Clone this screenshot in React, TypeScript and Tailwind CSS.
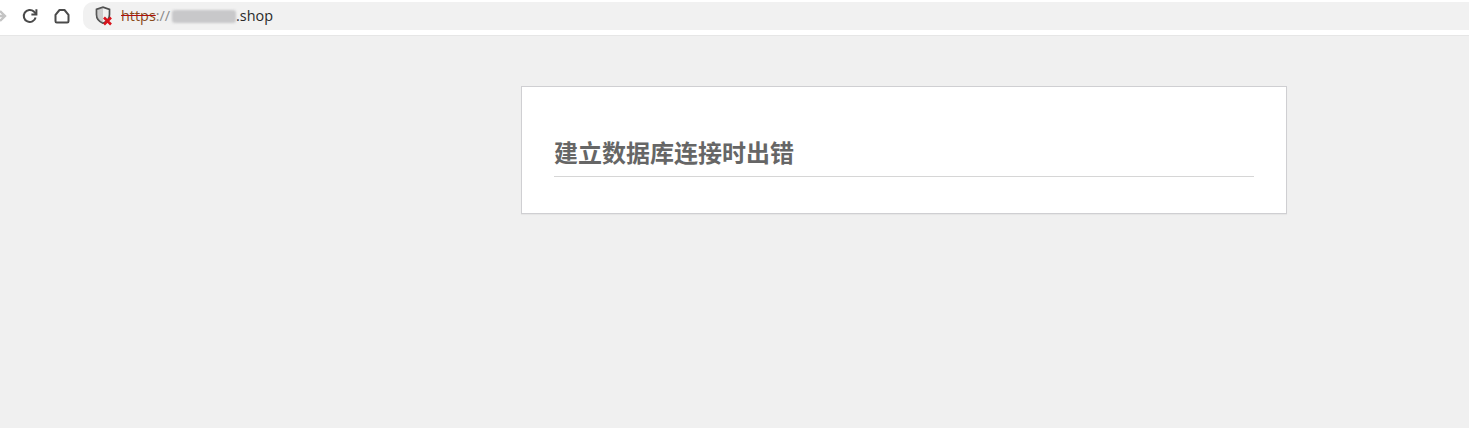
import React from 'react'

const TopBar = () => (
  <div className="flex h-[36px] items-start border-b border-[#e6e6e6] bg-white pt-[2px]">
    <div className="flex h-[28px] w-[21px] items-center">
      <svg width="8" height="14" viewBox="0 0 8 14" fill="none" stroke="#c4c4c4" strokeWidth="2.4">
        <path d="M-2 7h7M0 2l5 5-5 5" />
      </svg>
    </div>
    <div className="mr-[14px] flex h-[28px] items-center">
      <svg width="18" height="18" viewBox="0 0 18 18" fill="none" stroke="#4a4a4a" strokeWidth="2">
        <path d="M14.600 10.400A6 6 0 1 1 12.900 4.600L15 6.800" />
        <path d="M15.400 2.200V7.400H10.400" />
      </svg>
    </div>
    <div className="mr-[12px] flex h-[28px] items-center">
      <svg width="18" height="18" viewBox="0 0 18 18" fill="none" stroke="#4a4a4a" strokeWidth="2" strokeLinejoin="round">
        <path d="M2.500 7.800 6.500 3h5l4 4.800v6.400a1.300 1.300 0 0 1-1.300 1.300H3.800a1.300 1.300 0 0 1-1.300-1.300z" />
      </svg>
    </div>
    <div className="flex h-[28px] w-[1386px] items-center rounded-l-[10px] bg-[#f1f1f1] pl-[12px]">
      <svg width="19" height="20" viewBox="0 0 19 20" fill="none" className="mr-[7px]">
        <path d="M1.500 3.400 8 1.200l6.500 2.200v5.200c0 4.200-2.800 7.200-6.500 8.600-3.700-1.400-6.500-4.400-6.500-8.600z" stroke="#4d4d4d" strokeWidth="1.700" />
        <path d="M1.500 3.400 8 1.200v16C4.300 15.800 1.500 12.800 1.500 8.600z" fill="#8a8a8a" opacity="0.35" />
        <path d="M9 11.500l7 7M16 11.500l-7 7" stroke="#d8141c" strokeWidth="2.600" />
      </svg>
      <div className="flex items-center font-['Open_Sans','Noto_Sans',sans-serif] text-[14.4px] leading-none text-[#222]">
        <span className="text-[#8a4a1a] line-through decoration-[#b01010]">https</span>
        <span className="text-[#8a8a8a]">:</span>
        <span className="text-[#8a8a8a]">//</span>
        <div className="ml-[2px] h-[13px] w-[64px] rounded-[3px] bg-[#c8c8ca] blur-[1px]" />
        <span className="text-[#2a2a2a]">.shop</span>
      </div>
    </div>
  </div>
)

export default function App() {
  return (
    <div className="min-h-[428px] bg-[#f0f0f0]">
      <TopBar />
      <div className="pl-[521px] pt-[50px]">
        <div className="h-[128px] w-[766px] border border-[#cfcfd2] bg-white px-[32px] pt-[48px] shadow-[0_1px_1px_rgba(0,0,0,0.04)]">
          <h1 className="h-[42px] border-b border-[#d6d6d6] font-['Liberation_Sans','Noto_Sans_CJK_SC',sans-serif] text-[24px] leading-[38px] font-bold text-[#666]">
            建立数据库连接时出错
          </h1>
        </div>
      </div>
    </div>
  )
}
